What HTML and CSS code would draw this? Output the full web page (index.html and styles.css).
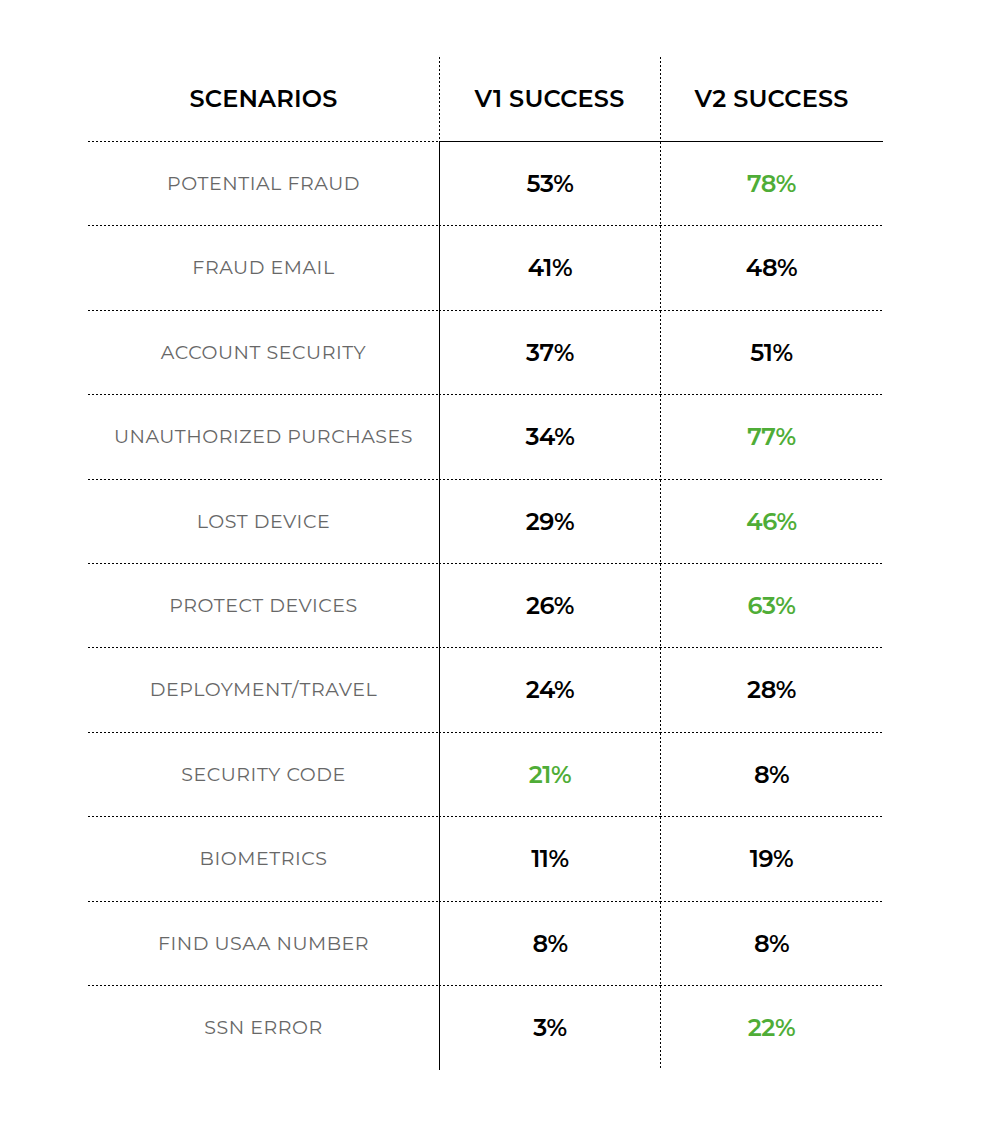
FILE: index.html
```html
<!DOCTYPE html>
<html>
<head>
<meta charset="utf-8">
<link rel="stylesheet" href="styles.css">
</head>
<body>
<div class="table">
  <div class="cell head label-head">SCENARIOS</div>
  <div class="cell head v1-head">V1 SUCCESS</div>
  <div class="cell head v2-head">V2 SUCCESS</div>

  <div class="cell label">POTENTIAL FRAUD</div>
  <div class="cell num v1">53%</div>
  <div class="cell num v2 good">78%</div>

  <div class="cell label">FRAUD EMAIL</div>
  <div class="cell num v1">41%</div>
  <div class="cell num v2">48%</div>

  <div class="cell label">ACCOUNT SECURITY</div>
  <div class="cell num v1">37%</div>
  <div class="cell num v2">51%</div>

  <div class="cell label">UNAUTHORIZED PURCHASES</div>
  <div class="cell num v1">34%</div>
  <div class="cell num v2 good">77%</div>

  <div class="cell label">LOST DEVICE</div>
  <div class="cell num v1">29%</div>
  <div class="cell num v2 good">46%</div>

  <div class="cell label">PROTECT DEVICES</div>
  <div class="cell num v1">26%</div>
  <div class="cell num v2 good">63%</div>

  <div class="cell label">DEPLOYMENT/TRAVEL</div>
  <div class="cell num v1">24%</div>
  <div class="cell num v2">28%</div>

  <div class="cell label">SECURITY CODE</div>
  <div class="cell num v1 good">21%</div>
  <div class="cell num v2">8%</div>

  <div class="cell label">BIOMETRICS</div>
  <div class="cell num v1">11%</div>
  <div class="cell num v2">19%</div>

  <div class="cell label">FIND USAA NUMBER</div>
  <div class="cell num v1">8%</div>
  <div class="cell num v2">8%</div>

  <div class="cell label last">SSN ERROR</div>
  <div class="cell num v1 last">3%</div>
  <div class="cell num v2 good last">22%</div>
</div>
</body>
</html>
```

FILE: styles.css
```css
html, body {
  margin: 0;
  padding: 0;
  background: #fff;
}

body {
  font-family: "Montserrat", "Inter", "Noto Sans", sans-serif;
}

.table {
  display: grid;
  grid-template-columns: 351px 221px 223px;
  grid-template-rows: 85px 84px 85px 84px 85px 84px 84px 85px 84px 85px 84px 84px;
  margin: 57px 0 0 88px;
  width: 795px;
}

.cell {
  display: flex;
  align-items: center;
  justify-content: center;
  box-sizing: border-box;
  background-repeat: no-repeat;
  text-align: center;
}

/* dotted bottom line */
.label,
.num,
.label-head {
  background-image: repeating-linear-gradient(to right, #000 0 2px, transparent 2px 4px);
  background-size: 100% 1px;
  background-position: left bottom;
}

.last {
  background-image: none;
}

/* dotted left line for V2 column, plus dotted bottom */
.v2 {
  background-image:
    repeating-linear-gradient(to right, #000 0 2px, transparent 2px 4px),
    repeating-linear-gradient(to bottom, #000 0 2px, transparent 2px 4px);
  background-size: 100% 1px, 1px 100%;
  background-position: left bottom, left top;
}

.v2.last,
.v1-head,
.v2-head {
  background-image: repeating-linear-gradient(to bottom, #000 0 2px, transparent 2px 4px);
  background-size: 1px 100%;
  background-position: left top;
}

.v1-head,
.v2-head {
  border-bottom: 1px solid #000;
}

.v1 {
  border-left: 1px solid #000;
  background-origin: border-box;
}

.head {
  font-size: 24px;
  font-weight: 600;
  color: #000;
  letter-spacing: 0.2px;
  padding-bottom: 2px;
}

.label {
  font-size: 19px;
  font-weight: 400;
  color: #676767;
  letter-spacing: 0.55px;
  padding-bottom: 2px;
}

.num {
  font-size: 24px;
  font-weight: 600;
  color: #000;
  letter-spacing: -0.4px;
  padding-bottom: 2px;
}

.num.good {
  color: #4fad37;
}
```
